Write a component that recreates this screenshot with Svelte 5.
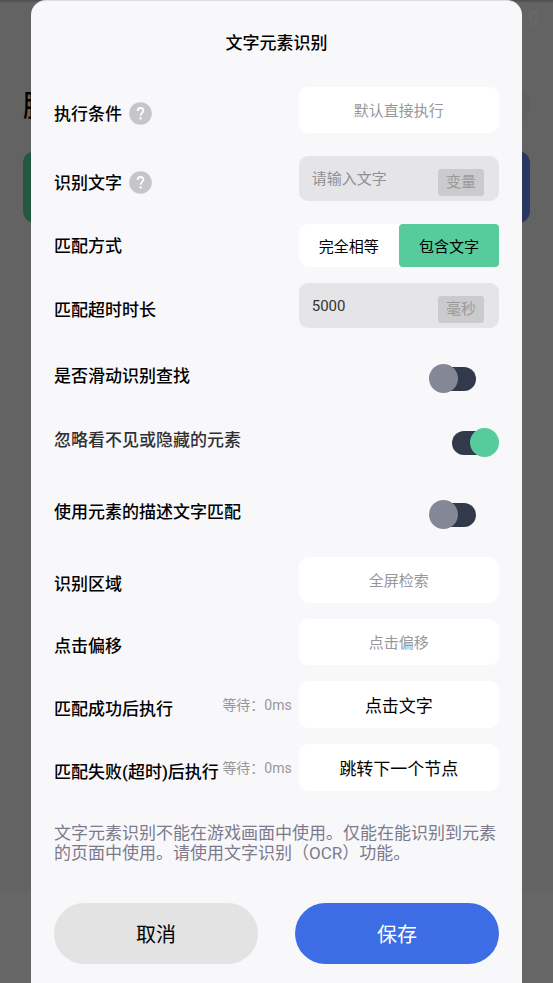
<script lang="ts">
    type Row = {
        id: string;
        label: string;
        kind: "pick" | "text" | "segment" | "switch";
        value?: string;
        help?: boolean;
        filled?: boolean;
        wait?: string;
        placeholder?: string;
        unit?: string;
        options?: string[];
        on?: boolean;
        soft?: boolean;
    };

    let groups: { name: string; rows: Row[] }[] = $state([
        {
            name: "match",
            rows: [
                { id: "condition", label: "执行条件", kind: "pick", value: "默认直接执行", help: true },
                { id: "keyword", label: "识别文字", kind: "text", value: "", placeholder: "请输入文字", unit: "变量", help: true },
                { id: "mode", label: "匹配方式", kind: "segment", value: "包含文字", options: ["完全相等", "包含文字"] },
                { id: "timeout", label: "匹配超时时长", kind: "text", value: "5000", unit: "毫秒" },
            ],
        },
        {
            name: "switches",
            rows: [
                { id: "scroll", label: "是否滑动识别查找", kind: "switch", on: false },
                { id: "hidden", label: "忽略看不见或隐藏的元素", kind: "switch", on: true, soft: true },
                { id: "desc", label: "使用元素的描述文字匹配", kind: "switch", on: false },
            ],
        },
        {
            name: "actions",
            rows: [
                { id: "area", label: "识别区域", kind: "pick", value: "全屏检索" },
                { id: "offset", label: "点击偏移", kind: "pick", value: "点击偏移" },
                { id: "success", label: "匹配成功后执行", kind: "pick", value: "点击文字", filled: true, wait: "0ms" },
                { id: "fail", label: "匹配失败(超时)后执行", kind: "pick", value: "跳转下一个节点", filled: true, wait: "0ms" },
            ],
        },
    ]);
</script>

<div class="screen">
    <div class="page" aria-hidden="true">
        <div class="page-count">9</div>
        <div class="page-head">
            <span class="page-title">脚</span>
            <span class="page-avatar"></span>
        </div>
        <div class="page-cards">
            <div class="page-card green"></div>
            <div class="page-card blue"></div>
        </div>
        <div class="page-foot"></div>
    </div>

    <div class="dialog" role="dialog" aria-labelledby="dialog-title">
        <h1 id="dialog-title">文字元素识别</h1>

        <form onsubmit={(e) => e.preventDefault()}>
            {#each groups as group}
                <div class="group {group.name}">
                    {#each group.rows as row}
                        <div class="row {row.kind} {row.id}">
                            <div class="name">
                                <label for={row.id} class:soft={row.soft}>{row.label}</label>
                                {#if row.help}
                                    <button type="button" class="help" aria-label="帮助">
                                        <svg viewBox="0 0 24 24" width="24" height="24">
                                            <circle cx="11.5" cy="11.5" r="11.3" fill="#c6c6ca" />
                                            <path
                                                d="M8.6 9C8.6 7 9.8 6 11.5 6C13.3 6 14.4 7 14.4 8.6C14.4 10.9 11.6 11 11.6 13.7"
                                                fill="none"
                                                stroke="#fff"
                                                stroke-width="1.8"
                                            />
                                            <circle cx="11.6" cy="16.4" r="1.2" fill="#fff" />
                                        </svg>
                                    </button>
                                {/if}
                            </div>

                            {#if row.wait}
                                <span class="wait">等待：{row.wait}</span>
                            {/if}

                            {#if row.kind === "pick"}
                                <button type="button" id={row.id} class="control picker" class:filled={row.filled}>
                                    {row.value}
                                </button>
                            {:else if row.kind === "text"}
                                <div class="control field">
                                    <input id={row.id} type="text" placeholder={row.placeholder} bind:value={row.value} />
                                    {#if row.id === "keyword"}
                                        <button type="button" class="unit">{row.unit}</button>
                                    {:else}
                                        <span class="unit">{row.unit}</span>
                                    {/if}
                                </div>
                            {:else if row.kind === "segment"}
                                <div class="control segments" id={row.id} role="group" aria-label={row.label}>
                                    {#each row.options ?? [] as option}
                                        <button
                                            type="button"
                                            class:active={row.value === option}
                                            aria-pressed={row.value === option}
                                            onclick={() => (row.value = option)}
                                        >
                                            {option}
                                        </button>
                                    {/each}
                                </div>
                            {:else}
                                <input id={row.id} class="toggle" type="checkbox" role="switch" bind:checked={row.on} />
                            {/if}
                        </div>
                    {/each}
                </div>
            {/each}

            <p class="note">
                文字元素识别不能在游戏画面中使用。仅能在能识别到元素的页面中使用。请使用文字识别（OCR）功能。
            </p>

            <div class="footer">
                <button type="button" class="cancel">取消</button>
                <button type="submit" class="save">保存</button>
            </div>
        </form>
    </div>
</div>

<style>
    :global(body) {
        background: #636363;
    }

    .screen {
        display: grid;
        min-height: 100vh;
        font-family: Roboto, "Noto Sans CJK SC", sans-serif;
        color: #000;
    }

    .screen > * {
        grid-area: 1 / 1;
        min-width: 0;
    }

    .screen button,
    .screen input {
        margin: 0;
        padding: 0;
        border: 0;
        background: none;
        font: inherit;
        color: inherit;
    }

    .screen button {
        cursor: pointer;
    }

    /* page behind the dialog */
    .page {
        display: flex;
        flex-direction: column;
        box-sizing: border-box;
        padding-top: 8px;
        background: linear-gradient(#4c4c4c, #636363 3px);
    }

    .page-count {
        height: 78px;
        padding-right: 14px;
        text-align: right;
        font-size: 20px;
        line-height: 22px;
        color: #696969;
    }

    .page-head {
        display: flex;
        align-items: center;
        justify-content: space-between;
        height: 40px;
        margin-bottom: 25px;
        padding: 0 23px;
    }

    .page-title {
        font-size: 30px;
        font-weight: 500;
        line-height: 40px;
    }

    .page-avatar {
        width: 38px;
        height: 38px;
        border-radius: 50%;
        background: #606060;
    }

    .page-cards {
        display: grid;
        grid-template-columns: 1fr 1fr;
        gap: 16px;
        padding: 0 23px;
    }

    .page-card {
        height: 72px;
        border-radius: 12px;
    }

    .page-card.green {
        background: #225740;
    }

    .page-card.blue {
        background: #293863;
    }

    .page-foot {
        height: 92px;
        margin-top: auto;
        background: #666;
    }

    /* dialog */
    .dialog {
        z-index: 1;
        box-sizing: border-box;
        margin: 0 31px;
        padding: 30px 23px 18px;
        border-top: 1px solid #dcdcdf;
        border-radius: 15px 15px 0 0;
        background: #f8f8fb;
    }

    h1 {
        margin: 0 0 32px;
        text-align: center;
        font-size: 17px;
        font-weight: 500;
        line-height: 24px;
    }

    .group {
        display: flex;
        flex-direction: column;
    }

    .match {
        gap: 23px;
    }

    .match .timeout {
        margin-top: -7px;
    }

    .switches {
        gap: 35px;
        padding: 36px 0 28px;
    }

    .switches .desc {
        margin-top: 8px;
    }

    .actions {
        gap: 16px;
    }

    .row {
        display: flex;
        align-items: center;
    }

    .name {
        display: flex;
        flex: 1;
        align-items: center;
        gap: 7px;
        padding-top: 8px;
        white-space: nowrap;
        font-size: 17px;
        font-weight: 500;
        line-height: 24px;
    }

    .segment .name {
        padding-top: 0;
    }

    .switch .name {
        padding: 0 0 6px;
        line-height: 22px;
    }

    .soft {
        color: #303034;
    }

    .help {
        display: flex;
    }

    .wait {
        margin-right: 7px;
        font-size: 14px;
        line-height: 20px;
        color: #97979c;
        white-space: nowrap;
    }

    .control {
        box-sizing: border-box;
        flex: none;
        width: 45%;
        height: 46px;
        border-radius: 9px;
        font-size: 15px;
    }

    .screen .picker {
        padding-bottom: 2px;
        background: #fff;
        font-size: 15px;
        color: #97979b;
    }

    .screen .picker.filled {
        height: 47px;
        padding-bottom: 0;
        font-size: 17px;
        color: #000;
    }

    .field {
        display: flex;
        align-items: center;
        gap: 8px;
        height: 45px;
        padding: 0 15px 0 13px;
        background: #e5e5e7;
    }

    .field input {
        flex: 1;
        min-width: 0;
        outline: none;
        color: #333;
    }

    .field input::placeholder {
        color: #909094;
        opacity: 1;
    }

    .screen .unit {
        margin-top: 7px;
        width: 46px;
        border-radius: 3px;
        background: #cbcbcd;
        text-align: center;
        font-size: 15px;
        line-height: 27px;
        color: #9a9a9a;
    }

    .segments {
        display: grid;
        grid-template-columns: 1fr 1fr;
        height: 43px;
        background: #fff;
    }

    .screen .segments .active {
        border-radius: 4px;
        background: #56cb9c;
    }

    .screen .toggle {
        display: grid;
        align-items: center;
        flex: none;
        width: 70px;
        height: 29px;
        appearance: none;
        cursor: pointer;
    }

    .toggle::before,
    .toggle::after {
        content: "";
        grid-area: 1 / 1;
    }

    .toggle::before {
        width: 42px;
        height: 24px;
        margin-left: 5px;
        border-radius: 12px;
        background: #31394a;
    }

    .toggle::after {
        width: 29px;
        height: 29px;
        border-radius: 50%;
        background: #848796;
    }

    .toggle:checked::before {
        margin-left: 23px;
    }

    .toggle:checked::after {
        justify-self: end;
        background: #56cb9c;
    }

    .note {
        margin: 32px 0 40px;
        font-size: 17px;
        line-height: 20px;
        color: #7c7a8c;
    }

    .footer {
        display: grid;
        grid-template-columns: 1fr 1fr;
        gap: 37px;
    }

    .screen .footer button {
        height: 61px;
        border-radius: 31px;
        font-size: 20px;
    }

    .screen .footer .cancel {
        background: #e3e3e3;
    }

    .screen .footer .save {
        background: #3c6de5;
        color: #fff;
    }
</style>
